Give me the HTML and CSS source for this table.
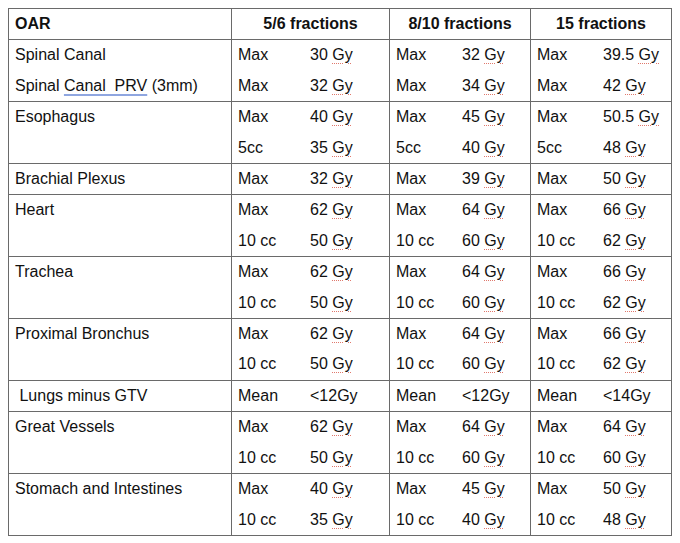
FILE: index.html
```html
<!DOCTYPE html>
<html>
<head>
<meta charset="utf-8">
<link rel="stylesheet" href="styles.css">
</head>
<body>
<div class="page">
<table class="oar">
  <colgroup>
    <col class="c-oar"><col class="c-f1"><col class="c-f2"><col class="c-f3">
  </colgroup>
  <thead>
    <tr>
      <th class="h-oar">OAR</th>
      <th class="h-frac">5/6 fractions</th>
      <th class="h-frac">8/10 fractions</th>
      <th class="h-frac">15 fractions</th>
    </tr>
  </thead>
  <tbody>
    <tr>
      <td class="organ"><div>Spinal Canal</div><div>Spinal <span class="gram">Canal&nbsp; PRV</span> (3mm)</div></td>
      <td class="dose f1"><div class="ln"><span class="lb">Max</span><span>30 <span class="sp">Gy</span></span></div><div class="ln"><span class="lb">Max</span><span>32 <span class="sp">Gy</span></span></div></td>
      <td class="dose"><div class="ln"><span class="lb">Max</span><span>32 <span class="sp">Gy</span></span></div><div class="ln"><span class="lb">Max</span><span>34 <span class="sp">Gy</span></span></div></td>
      <td class="dose"><div class="ln"><span class="lb">Max</span><span>39.5 <span class="sp">Gy</span></span></div><div class="ln"><span class="lb">Max</span><span>42 <span class="sp">Gy</span></span></div></td>
    </tr>
    <tr>
      <td class="organ"><div>Esophagus</div></td>
      <td class="dose f1"><div class="ln"><span class="lb">Max</span><span>40 <span class="sp">Gy</span></span></div><div class="ln"><span class="lb">5cc</span><span>35 <span class="sp">Gy</span></span></div></td>
      <td class="dose"><div class="ln"><span class="lb">Max</span><span>45 <span class="sp">Gy</span></span></div><div class="ln"><span class="lb">5cc</span><span>40 <span class="sp">Gy</span></span></div></td>
      <td class="dose"><div class="ln"><span class="lb">Max</span><span>50.5 <span class="sp">Gy</span></span></div><div class="ln"><span class="lb">5cc</span><span>48 <span class="sp">Gy</span></span></div></td>
    </tr>
    <tr>
      <td class="organ"><div>Brachial Plexus</div></td>
      <td class="dose f1"><div class="ln"><span class="lb">Max</span><span>32 <span class="sp">Gy</span></span></div></td>
      <td class="dose"><div class="ln"><span class="lb">Max</span><span>39 <span class="sp">Gy</span></span></div></td>
      <td class="dose"><div class="ln"><span class="lb">Max</span><span>50 <span class="sp">Gy</span></span></div></td>
    </tr>
    <tr>
      <td class="organ"><div>Heart</div></td>
      <td class="dose f1"><div class="ln"><span class="lb">Max</span><span>62 <span class="sp">Gy</span></span></div><div class="ln"><span class="lb">10 cc</span><span>50 <span class="sp">Gy</span></span></div></td>
      <td class="dose"><div class="ln"><span class="lb">Max</span><span>64 <span class="sp">Gy</span></span></div><div class="ln"><span class="lb">10 cc</span><span>60 <span class="sp">Gy</span></span></div></td>
      <td class="dose"><div class="ln"><span class="lb">Max</span><span>66 <span class="sp">Gy</span></span></div><div class="ln"><span class="lb">10 cc</span><span>62 <span class="sp">Gy</span></span></div></td>
    </tr>
    <tr>
      <td class="organ"><div>Trachea</div></td>
      <td class="dose f1"><div class="ln"><span class="lb">Max</span><span>62 <span class="sp">Gy</span></span></div><div class="ln"><span class="lb">10 cc</span><span>50 <span class="sp">Gy</span></span></div></td>
      <td class="dose"><div class="ln"><span class="lb">Max</span><span>64 <span class="sp">Gy</span></span></div><div class="ln"><span class="lb">10 cc</span><span>60 <span class="sp">Gy</span></span></div></td>
      <td class="dose"><div class="ln"><span class="lb">Max</span><span>66 <span class="sp">Gy</span></span></div><div class="ln"><span class="lb">10 cc</span><span>62 <span class="sp">Gy</span></span></div></td>
    </tr>
    <tr>
      <td class="organ"><div>Proximal Bronchus</div></td>
      <td class="dose f1"><div class="ln"><span class="lb">Max</span><span>62 <span class="sp">Gy</span></span></div><div class="ln"><span class="lb">10 cc</span><span>50 <span class="sp">Gy</span></span></div></td>
      <td class="dose"><div class="ln"><span class="lb">Max</span><span>64 <span class="sp">Gy</span></span></div><div class="ln"><span class="lb">10 cc</span><span>60 <span class="sp">Gy</span></span></div></td>
      <td class="dose"><div class="ln"><span class="lb">Max</span><span>66 <span class="sp">Gy</span></span></div><div class="ln"><span class="lb">10 cc</span><span>62 <span class="sp">Gy</span></span></div></td>
    </tr>
    <tr>
      <td class="organ"><div>&nbsp;Lungs minus GTV</div></td>
      <td class="dose f1"><div class="ln"><span class="lb">Mean</span><span>&lt;12Gy</span></div></td>
      <td class="dose"><div class="ln"><span class="lb">Mean</span><span>&lt;12Gy</span></div></td>
      <td class="dose"><div class="ln"><span class="lb">Mean</span><span>&lt;14Gy</span></div></td>
    </tr>
    <tr>
      <td class="organ"><div>Great Vessels</div></td>
      <td class="dose f1"><div class="ln"><span class="lb">Max</span><span>62 <span class="sp">Gy</span></span></div><div class="ln"><span class="lb">10 cc</span><span>50 <span class="sp">Gy</span></span></div></td>
      <td class="dose"><div class="ln"><span class="lb">Max</span><span>64 <span class="sp">Gy</span></span></div><div class="ln"><span class="lb">10 cc</span><span>60 <span class="sp">Gy</span></span></div></td>
      <td class="dose"><div class="ln"><span class="lb">Max</span><span>64 <span class="sp">Gy</span></span></div><div class="ln"><span class="lb">10 cc</span><span>60 <span class="sp">Gy</span></span></div></td>
    </tr>
    <tr>
      <td class="organ"><div>Stomach and Intestines</div></td>
      <td class="dose f1"><div class="ln"><span class="lb">Max</span><span>40 <span class="sp">Gy</span></span></div><div class="ln"><span class="lb">10 cc</span><span>35 <span class="sp">Gy</span></span></div></td>
      <td class="dose"><div class="ln"><span class="lb">Max</span><span>45 <span class="sp">Gy</span></span></div><div class="ln"><span class="lb">10 cc</span><span>40 <span class="sp">Gy</span></span></div></td>
      <td class="dose"><div class="ln"><span class="lb">Max</span><span>50 <span class="sp">Gy</span></span></div><div class="ln"><span class="lb">10 cc</span><span>48 <span class="sp">Gy</span></span></div></td>
    </tr>
  </tbody>
</table>
</div>
</body>
</html>
```

FILE: styles.css
```css
html, body {
  margin: 0;
  padding: 0;
  background: #ffffff;
}
.page {
  padding: 8px;
  font-family: "Liberation Sans", Arial, sans-serif;
  font-size: 16px;
  color: #111;
}
.oar {
  border-collapse: collapse;
  table-layout: fixed;
  width: 664px;
}
.c-oar { width: 223px; }
.c-f1 { width: 158px; }
.c-f2 { width: 141px; }
.c-f3 { width: 141px; }
.oar th,
.oar td {
  border: 1px solid #6a6a6a;
  padding: 0 6px;
  line-height: 30.4px;
  vertical-align: top;
}
.oar th {
  font-weight: bold;
  text-align: center;
}
.oar th.h-oar {
  text-align: left;
}
.organ {
  white-space: pre;
}
.ln {
  display: flex;
  white-space: nowrap;
}
.lb {
  width: 66px;
  flex: none;
}
.f1 .lb {
  width: 72px;
}
.sp {
  text-decoration: underline dotted #e0786c;
  text-decoration-thickness: 1px;
  text-underline-offset: 3px;
}
.gram {
  text-decoration: underline #8fa6e0;
  text-decoration-thickness: 2px;
  text-underline-offset: 3px;
}
```
